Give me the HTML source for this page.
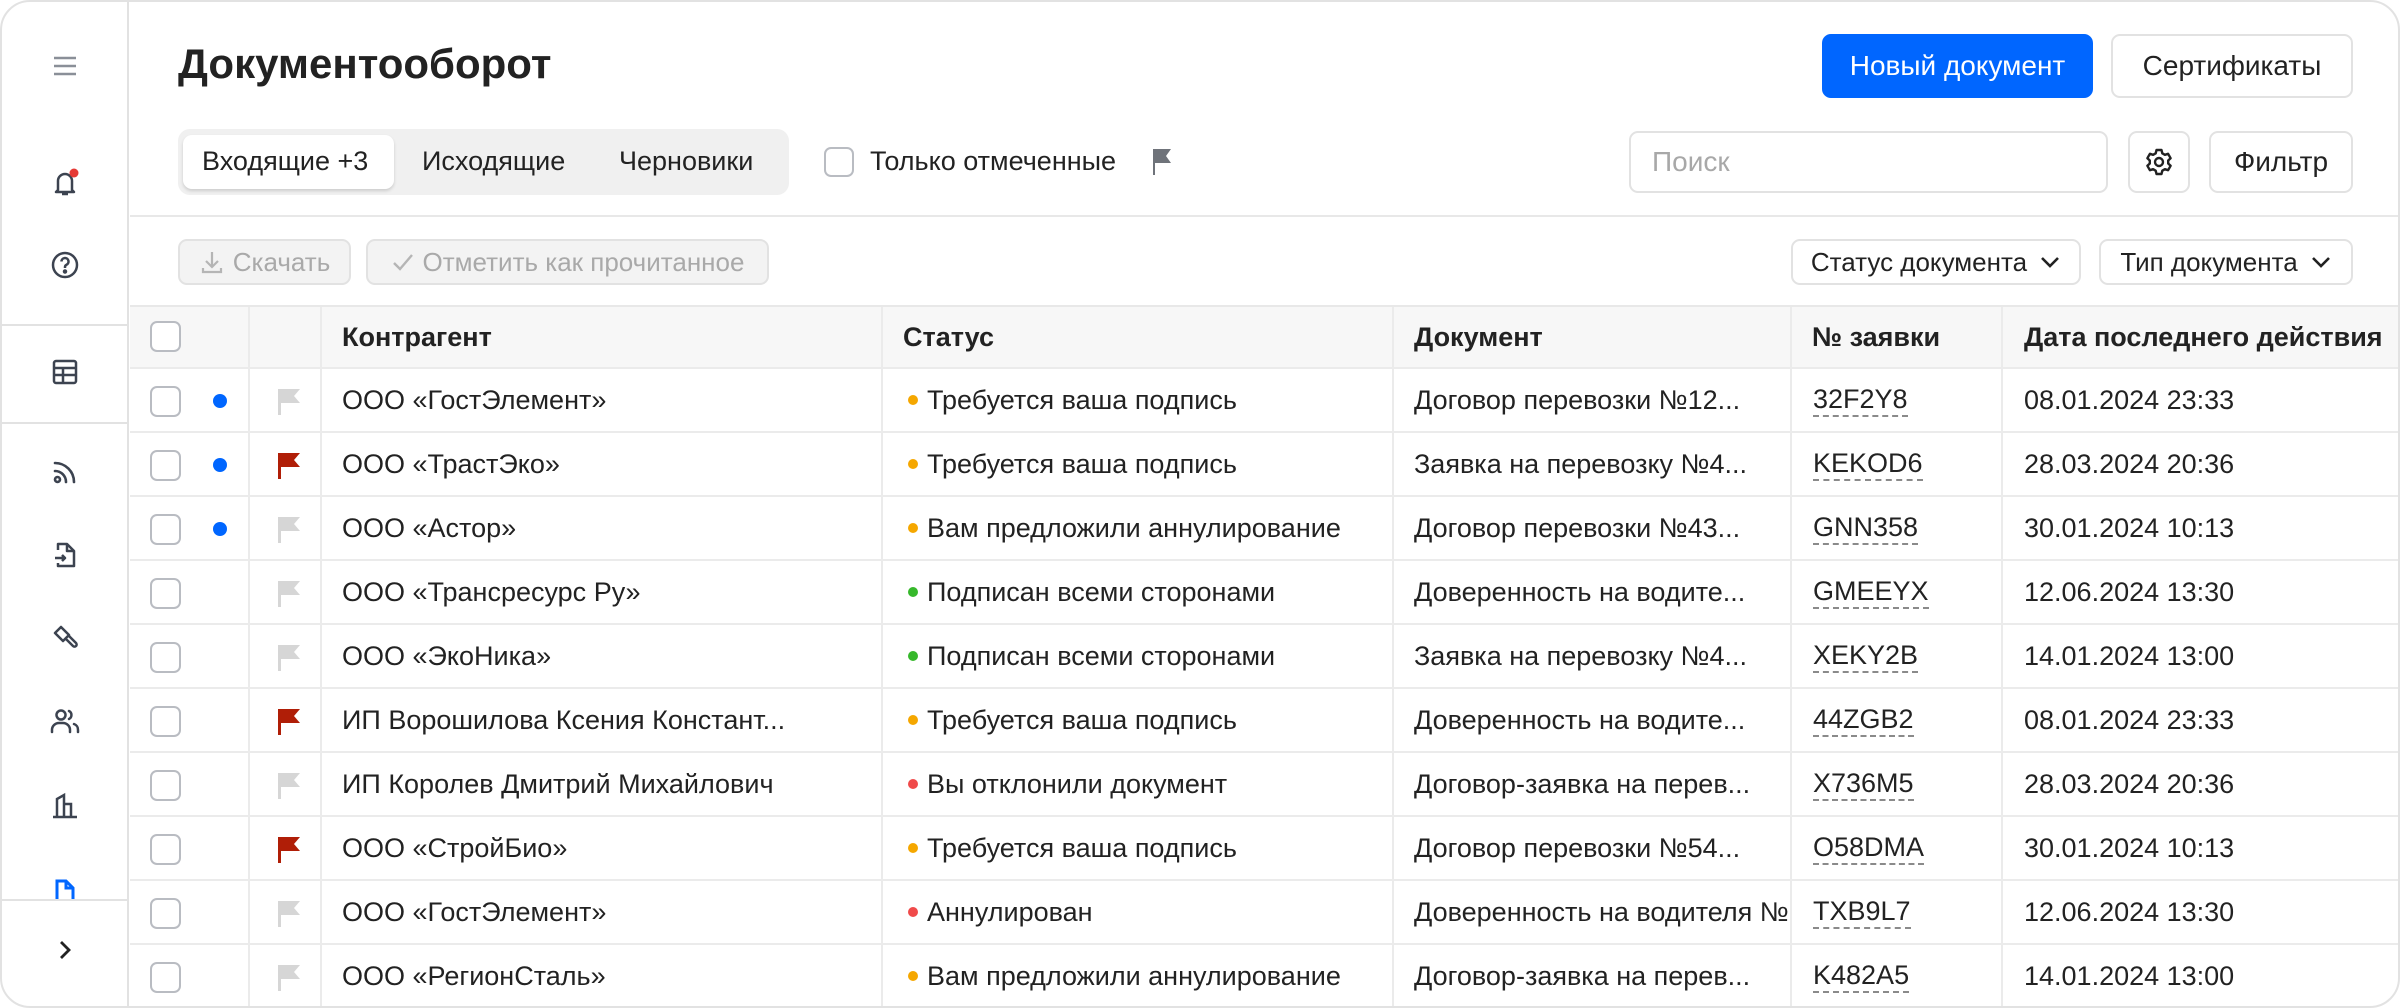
<!DOCTYPE html>
<html><head><meta charset="utf-8">
<style>
*{box-sizing:border-box;margin:0;padding:0}
body{width:2400px;height:1008px;background:#fff;font-family:"Liberation Sans","Noto Sans CJK SC",sans-serif;color:#222;overflow:hidden;position:relative}
.card{position:absolute;left:0;top:0;width:2400px;height:1008px;border:2px solid #e2e2e2;border-radius:30px;overflow:hidden;background:#fff}
.side{position:absolute;left:0;top:0;width:127px;height:1008px;border-right:2px solid #e2e2e2}
.ic{position:absolute;left:47px;width:32px;height:32px}
.hr{position:absolute;left:0;width:127px;height:2px;background:#e2e2e2}
.abs{position:absolute}
.btn{position:absolute;border:2px solid #e2e2e2;border-radius:9px;background:#fff;font-size:28px;display:flex;align-items:center;justify-content:center;color:#222}
.tbl{position:absolute;left:128px;top:303px;width:2272px}
.row{position:absolute;left:0;width:2272px;height:64px;border-bottom:2px solid #ebebeb}
.cell{position:absolute;top:0;height:100%;display:flex;align-items:center;font-size:27px;white-space:nowrap;overflow:hidden}
.vl{position:absolute;top:0;width:2px;height:100%;background:#ebebeb}
.cb{position:absolute;left:20px;top:17px;width:31px;height:31px;border:2px solid #b9bcc2;border-radius:7px;background:#fff}
.dotb{position:absolute;left:83px;top:25px;width:14px;height:14px;border-radius:50%;background:#0066ff}
.flag{position:absolute;left:146px;top:19px}
.sd{display:inline-block;width:10px;height:10px;border-radius:50%;margin-right:9px}
.num{border-bottom:2px dashed #8a8a8a;line-height:32px}
</style></head><body>
<div class="card">
<div class="side">
 <svg class="ic" style="top:48px" viewBox="0 0 32 32"><path d="M5 8h22M5 16h22M5 24h22" stroke="#8a8f98" stroke-width="2.6"/></svg>
 <svg class="ic" style="top:165px" viewBox="0 0 32 32" fill="none" stroke="#3c4350" stroke-width="2.5"><path d="M9 23V14a7 7 0 0 1 14 0v9l2 2H7z M13 27h6" stroke-linejoin="round"/><circle cx="25" cy="6" r="4.5" fill="#e53935" stroke="none"/></svg>
 <svg class="ic" style="top:247px" viewBox="0 0 32 32" fill="none" stroke="#3c4350" stroke-width="2.5"><circle cx="16" cy="16" r="12"/><path d="M12.5 12.5a3.5 3.5 0 1 1 5 3.2c-1 .5-1.5 1.2-1.5 2.3v1"/><circle cx="16" cy="22.5" r="1" fill="#3c4350"/></svg>
 <div class="hr" style="top:322px"></div>
 <svg class="ic" style="top:354px" viewBox="0 0 32 32" fill="none" stroke="#3c4350" stroke-width="2.5"><rect x="5" y="5" width="22" height="22" rx="2"/><path d="M5 12h22M5 19h22M14 12v15"/></svg>
 <div class="hr" style="top:420px"></div>
 <svg class="ic" style="top:454px" viewBox="0 0 32 32" fill="none" stroke="#3c4350" stroke-width="2.6"><circle cx="8.5" cy="23.5" r="2.5"/><path d="M6 15a11 11 0 0 1 11 11M6 7a19 19 0 0 1 19 19" stroke-linecap="round"/></svg>
 <svg class="ic" style="top:537px" viewBox="0 0 32 32" fill="none" stroke="#3c4350" stroke-width="2.5" stroke-linejoin="round"><path d="M9 11V5h9l7 7v15H9v-3M18 5v7h7M6 19h10l-3-3M16 19l-3 3"/></svg>
 <svg class="ic" style="top:619px" viewBox="0 0 32 32" fill="none" stroke="#3c4350" stroke-width="2.5" stroke-linejoin="round"><path d="M6 12l6-6 8 8-6 6zM16 17l8 8a2 2 0 0 0 3-3l-8-8"/></svg>
 <svg class="ic" style="top:703px" viewBox="0 0 32 32" fill="none" stroke="#3c4350" stroke-width="2.5" stroke-linecap="round"><circle cx="12" cy="10" r="4.5"/><path d="M3 27v-2a7 7 0 0 1 7-7h4a7 7 0 0 1 7 7v2M20 6a4.5 4.5 0 0 1 0 8M25 19a6 6 0 0 1 4 6v2"/></svg>
 <svg class="ic" style="top:788px" viewBox="0 0 32 32" fill="none" stroke="#3c4350" stroke-width="2.5"><path d="M4 27h24M8 27V9l7-4v22M15 14h7v13"/></svg>
 <svg class="ic" style="top:874px;height:24px" viewBox="0 0 32 24" fill="none" stroke="#0066ff" stroke-width="3"><path d="M8 24V5h9l7 7v12M17 5v7h7"/></svg>
 <div class="hr" style="top:897px"></div>
 <svg class="ic" style="top:932px" viewBox="0 0 32 32" fill="none" stroke="#222" stroke-width="2.8"><path d="M12 8l8 8-8 8"/></svg>
</div>

<div class="abs" style="left:176px;top:38px;font-size:42px;font-weight:bold;color:#222">Документооборот</div>
<div class="btn" style="left:1820px;top:32px;width:271px;height:64px;background:#0066ff;border-color:#0066ff;color:#fff">Новый документ</div>
<div class="btn" style="left:2109px;top:32px;width:242px;height:64px">Сертификаты</div>

<div class="abs" style="left:176px;top:127px;width:611px;height:66px;background:#f0f0f0;border-radius:12px"></div>
<div class="abs" style="left:181px;top:133px;width:211px;height:54px;background:#fff;border-radius:9px;box-shadow:0 2px 3px rgba(0,0,0,.15)"></div>
<div class="abs" style="left:200px;top:144px;font-size:27px">Входящие +3</div>
<div class="abs" style="left:420px;top:144px;font-size:27px">Исходящие</div>
<div class="abs" style="left:617px;top:144px;font-size:27px">Черновики</div>
<div class="abs" style="left:822px;top:145px;width:30px;height:30px;border:2px solid #b9bcc2;border-radius:7px"></div>
<div class="abs" style="left:868px;top:144px;font-size:27px">Только отмеченные</div>
<svg class="abs" style="left:1148px;top:146px" width="24" height="28" viewBox="0 0 24 28"><path d="M3 1h18l-5 7 5 7H5v12H3z" fill="#6f737a"/></svg>

<div class="abs" style="left:1627px;top:129px;width:479px;height:62px;border:2px solid #e2e2e2;border-radius:9px"></div>
<div class="abs" style="left:1650px;top:144px;font-size:28px;color:#a8a8a8">Поиск</div>
<div class="btn" style="left:2126px;top:129px;width:62px;height:62px"><svg width="30" height="30" viewBox="0 0 30 30" fill="none" stroke="#222" stroke-width="2.4" stroke-linejoin="round"><path d="M12.5 3h5l.8 3.3 2.6 1.5 3.2-1 2.5 4.4-2.4 2.3v3l2.4 2.3-2.5 4.4-3.2-1-2.6 1.5-.8 3.3h-5l-.8-3.3-2.6-1.5-3.2 1-2.5-4.4 2.4-2.3v-3L3.4 11.2l2.5-4.4 3.2 1 2.6-1.5z"/><circle cx="15" cy="15" r="4"/></svg></div>
<div class="btn" style="left:2207px;top:129px;width:144px;height:62px">Фильтр</div>

<div class="abs" style="left:128px;top:213px;width:2272px;height:2px;background:#e8e8e8"></div>

<div class="btn" style="left:176px;top:237px;width:173px;height:46px;background:#f3f3f3;color:#a9a9a9;font-size:26px"><svg width="26" height="26" viewBox="0 0 26 26" fill="none" stroke="#b5b5b5" stroke-width="2.2" style="margin-right:8px"><path d="M13 3v14M7 12l6 6 6-6M4 19v4h18v-4"/></svg>Скачать</div>
<div class="btn" style="left:364px;top:237px;width:403px;height:46px;background:#f3f3f3;color:#a9a9a9;font-size:26px"><svg width="24" height="24" viewBox="0 0 24 24" fill="none" stroke="#b5b5b5" stroke-width="2.4" style="margin-right:8px"><path d="M3 13l6 6L21 5"/></svg>Отметить как прочитанное</div>
<div class="btn" style="left:1789px;top:237px;width:290px;height:46px;font-size:26px">Статус документа<svg width="22" height="14" viewBox="0 0 22 14" fill="none" stroke="#222" stroke-width="2.6" style="margin-left:12px"><path d="M3 3l8 8 8-8"/></svg></div>
<div class="btn" style="left:2097px;top:237px;width:254px;height:46px;font-size:26px">Тип документа<svg width="22" height="14" viewBox="0 0 22 14" fill="none" stroke="#222" stroke-width="2.6" style="margin-left:12px"><path d="M3 3l8 8 8-8"/></svg></div>

<div class="tbl">
 <div class="row" style="top:0;height:64px;background:#f7f7f7;border-top:2px solid #e8e8e8">
  <div class="cb" style="top:14px"></div>
  <div class="vl" style="left:118px"></div><div class="vl" style="left:190px"></div><div class="vl" style="left:751px"></div><div class="vl" style="left:1262px"></div><div class="vl" style="left:1660px"></div><div class="vl" style="left:1871px"></div>
  <div class="cell" style="left:212px;font-weight:bold">Контрагент</div>
  <div class="cell" style="left:773px;font-weight:bold">Статус</div>
  <div class="cell" style="left:1284px;font-weight:bold">Документ</div>
  <div class="cell" style="left:1682px;font-weight:bold">№ заявки</div>
  <div class="cell" style="left:1894px;font-weight:bold">Дата последнего действия</div>
 </div>
</div>
<div class="tbl" style="top:367px">
<div class="row" style="top:0px"><div class="cb"></div><div class="dotb"></div><svg class="flag" width="26" height="28" viewBox="0 0 26 28"><path d="M2 1h22l-6 7 6 7H5v12H2z" fill="#d6d6d6"/></svg><div class="vl" style="left:118px"></div><div class="vl" style="left:190px"></div><div class="vl" style="left:751px"></div><div class="vl" style="left:1262px"></div><div class="vl" style="left:1660px"></div><div class="vl" style="left:1871px"></div><div class="cell" style="left:212px;width:530px">ООО «ГостЭлемент»</div><div class="cell" style="left:778px"><span class="sd" style="background:#f5a700"></span>Требуется ваша подпись</div><div class="cell" style="left:1284px;width:376px">Договор перевозки №12...</div><div class="cell" style="left:1683px"><span class="num">32F2Y8</span></div><div class="cell" style="left:1894px">08.01.2024 23:33</div></div>
<div class="row" style="top:64px"><div class="cb"></div><div class="dotb"></div><svg class="flag" width="26" height="28" viewBox="0 0 26 28"><path d="M2 1h22l-6 7 6 7H5v12H2z" fill="#b01e07"/></svg><div class="vl" style="left:118px"></div><div class="vl" style="left:190px"></div><div class="vl" style="left:751px"></div><div class="vl" style="left:1262px"></div><div class="vl" style="left:1660px"></div><div class="vl" style="left:1871px"></div><div class="cell" style="left:212px;width:530px">ООО «ТрастЭко»</div><div class="cell" style="left:778px"><span class="sd" style="background:#f5a700"></span>Требуется ваша подпись</div><div class="cell" style="left:1284px;width:376px">Заявка на перевозку №4...</div><div class="cell" style="left:1683px"><span class="num">KEKOD6</span></div><div class="cell" style="left:1894px">28.03.2024 20:36</div></div>
<div class="row" style="top:128px"><div class="cb"></div><div class="dotb"></div><svg class="flag" width="26" height="28" viewBox="0 0 26 28"><path d="M2 1h22l-6 7 6 7H5v12H2z" fill="#d6d6d6"/></svg><div class="vl" style="left:118px"></div><div class="vl" style="left:190px"></div><div class="vl" style="left:751px"></div><div class="vl" style="left:1262px"></div><div class="vl" style="left:1660px"></div><div class="vl" style="left:1871px"></div><div class="cell" style="left:212px;width:530px">ООО «Астор»</div><div class="cell" style="left:778px"><span class="sd" style="background:#f5a700"></span>Вам предложили аннулирование</div><div class="cell" style="left:1284px;width:376px">Договор перевозки №43...</div><div class="cell" style="left:1683px"><span class="num">GNN358</span></div><div class="cell" style="left:1894px">30.01.2024 10:13</div></div>
<div class="row" style="top:192px"><div class="cb"></div><svg class="flag" width="26" height="28" viewBox="0 0 26 28"><path d="M2 1h22l-6 7 6 7H5v12H2z" fill="#d6d6d6"/></svg><div class="vl" style="left:118px"></div><div class="vl" style="left:190px"></div><div class="vl" style="left:751px"></div><div class="vl" style="left:1262px"></div><div class="vl" style="left:1660px"></div><div class="vl" style="left:1871px"></div><div class="cell" style="left:212px;width:530px">ООО «Трансресурс Ру»</div><div class="cell" style="left:778px"><span class="sd" style="background:#36b82b"></span>Подписан всеми сторонами</div><div class="cell" style="left:1284px;width:376px">Доверенность на водите...</div><div class="cell" style="left:1683px"><span class="num">GMEEYX</span></div><div class="cell" style="left:1894px">12.06.2024 13:30</div></div>
<div class="row" style="top:256px"><div class="cb"></div><svg class="flag" width="26" height="28" viewBox="0 0 26 28"><path d="M2 1h22l-6 7 6 7H5v12H2z" fill="#d6d6d6"/></svg><div class="vl" style="left:118px"></div><div class="vl" style="left:190px"></div><div class="vl" style="left:751px"></div><div class="vl" style="left:1262px"></div><div class="vl" style="left:1660px"></div><div class="vl" style="left:1871px"></div><div class="cell" style="left:212px;width:530px">ООО «ЭкоНика»</div><div class="cell" style="left:778px"><span class="sd" style="background:#36b82b"></span>Подписан всеми сторонами</div><div class="cell" style="left:1284px;width:376px">Заявка на перевозку №4...</div><div class="cell" style="left:1683px"><span class="num">XEKY2B</span></div><div class="cell" style="left:1894px">14.01.2024 13:00</div></div>
<div class="row" style="top:320px"><div class="cb"></div><svg class="flag" width="26" height="28" viewBox="0 0 26 28"><path d="M2 1h22l-6 7 6 7H5v12H2z" fill="#b01e07"/></svg><div class="vl" style="left:118px"></div><div class="vl" style="left:190px"></div><div class="vl" style="left:751px"></div><div class="vl" style="left:1262px"></div><div class="vl" style="left:1660px"></div><div class="vl" style="left:1871px"></div><div class="cell" style="left:212px;width:530px">ИП Ворошилова Ксения Констант...</div><div class="cell" style="left:778px"><span class="sd" style="background:#f5a700"></span>Требуется ваша подпись</div><div class="cell" style="left:1284px;width:376px">Доверенность на водите...</div><div class="cell" style="left:1683px"><span class="num">44ZGB2</span></div><div class="cell" style="left:1894px">08.01.2024 23:33</div></div>
<div class="row" style="top:384px"><div class="cb"></div><svg class="flag" width="26" height="28" viewBox="0 0 26 28"><path d="M2 1h22l-6 7 6 7H5v12H2z" fill="#d6d6d6"/></svg><div class="vl" style="left:118px"></div><div class="vl" style="left:190px"></div><div class="vl" style="left:751px"></div><div class="vl" style="left:1262px"></div><div class="vl" style="left:1660px"></div><div class="vl" style="left:1871px"></div><div class="cell" style="left:212px;width:530px">ИП Королев Дмитрий Михайлович</div><div class="cell" style="left:778px"><span class="sd" style="background:#f04a4a"></span>Вы отклонили документ</div><div class="cell" style="left:1284px;width:376px">Договор-заявка на перев...</div><div class="cell" style="left:1683px"><span class="num">X736M5</span></div><div class="cell" style="left:1894px">28.03.2024 20:36</div></div>
<div class="row" style="top:448px"><div class="cb"></div><svg class="flag" width="26" height="28" viewBox="0 0 26 28"><path d="M2 1h22l-6 7 6 7H5v12H2z" fill="#b01e07"/></svg><div class="vl" style="left:118px"></div><div class="vl" style="left:190px"></div><div class="vl" style="left:751px"></div><div class="vl" style="left:1262px"></div><div class="vl" style="left:1660px"></div><div class="vl" style="left:1871px"></div><div class="cell" style="left:212px;width:530px">ООО «СтройБио»</div><div class="cell" style="left:778px"><span class="sd" style="background:#f5a700"></span>Требуется ваша подпись</div><div class="cell" style="left:1284px;width:376px">Договор перевозки №54...</div><div class="cell" style="left:1683px"><span class="num">O58DMA</span></div><div class="cell" style="left:1894px">30.01.2024 10:13</div></div>
<div class="row" style="top:512px"><div class="cb"></div><svg class="flag" width="26" height="28" viewBox="0 0 26 28"><path d="M2 1h22l-6 7 6 7H5v12H2z" fill="#d6d6d6"/></svg><div class="vl" style="left:118px"></div><div class="vl" style="left:190px"></div><div class="vl" style="left:751px"></div><div class="vl" style="left:1262px"></div><div class="vl" style="left:1660px"></div><div class="vl" style="left:1871px"></div><div class="cell" style="left:212px;width:530px">ООО «ГостЭлемент»</div><div class="cell" style="left:778px"><span class="sd" style="background:#f04a4a"></span>Аннулирован</div><div class="cell" style="left:1284px;width:376px">Доверенность на водителя №12</div><div class="cell" style="left:1683px"><span class="num">TXB9L7</span></div><div class="cell" style="left:1894px">12.06.2024 13:30</div></div>
<div class="row" style="top:576px"><div class="cb"></div><svg class="flag" width="26" height="28" viewBox="0 0 26 28"><path d="M2 1h22l-6 7 6 7H5v12H2z" fill="#d6d6d6"/></svg><div class="vl" style="left:118px"></div><div class="vl" style="left:190px"></div><div class="vl" style="left:751px"></div><div class="vl" style="left:1262px"></div><div class="vl" style="left:1660px"></div><div class="vl" style="left:1871px"></div><div class="cell" style="left:212px;width:530px">ООО «РегионСталь»</div><div class="cell" style="left:778px"><span class="sd" style="background:#f5a700"></span>Вам предложили аннулирование</div><div class="cell" style="left:1284px;width:376px">Договор-заявка на перев...</div><div class="cell" style="left:1683px"><span class="num">K482A5</span></div><div class="cell" style="left:1894px">14.01.2024 13:00</div></div>
</div>
</div>
</body></html>
